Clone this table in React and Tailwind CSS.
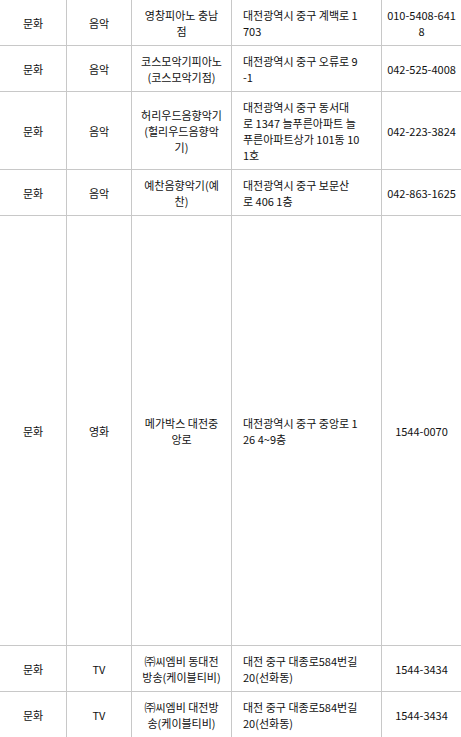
import React from "react";

const rows = [
  { a: "문화", b: "음악", c: ["영창피아노 충남", "점"], d: ["대전광역시 중구 계백로 1", "703"], e: ["010-5408-641", "8"] },
  { a: "문화", b: "음악", c: ["코스모악기피아노", "(코스모악기점)"], d: ["대전광역시 중구 오류로 9", "-1"], e: ["042-525-4008"] },
  { a: "문화", b: "음악", c: ["허리우드음향악기", "(헐리우드음향악", "기)"], d: ["대전광역시 중구 동서대", "로 1347 늘푸른아파트 늘", "푸른아파트상가 101동 10", "1호"], e: ["042-223-3824"] },
  { a: "문화", b: "음악", c: ["예찬음향악기(예", "찬)"], d: ["대전광역시 중구 보문산", "로 406 1층"], e: ["042-863-1625"] },
  { a: "문화", b: "영화", c: ["메가박스 대전중", "앙로"], d: ["대전광역시 중구 중앙로 1", "26 4~9층"], e: ["1544-0070"], tall: true },
  { a: "문화", b: "TV", c: ["㈜씨엠비 동대전", "방송(케이블티비)"], d: ["대전 중구 대종로584번길", "20(선화동)"], e: ["1544-3434"] },
  { a: "문화", b: "TV", c: ["㈜씨엠비 대전방", "송(케이블티비)"], d: ["대전 중구 대종로584번길", "20(선화동)"], e: ["1544-3434"] },
];

function Lines({ lines }) {
  return (
    <div>
      {lines.map((l, i) => (
        <div key={i} className="whitespace-nowrap">{l}</div>
      ))}
    </div>
  );
}

export default function App() {
  return (
    <div
      className="w-[461px] h-[737px] overflow-hidden bg-white text-[#111] text-[11px] leading-[16px]"
      style={{ fontFamily: '"Noto Sans CJK KR", "Noto Sans", sans-serif' }}
    >
      {rows.map((r, i) => (
        <div
          key={i}
          className={`grid grid-cols-[67px_65px_100px_150px_1fr] border-b border-[#c8c8c8] ${r.tall ? "h-[430px]" : ""}`}
        >
          <div className="flex items-center justify-center border-r border-[#c8c8c8] py-[6.5px] text-center">
            {r.a}
          </div>
          <div className="flex items-center justify-center border-r border-[#c8c8c8] py-[6.5px] text-center">
            {r.b}
          </div>
          <div className="flex items-center justify-center border-r border-[#c8c8c8] py-[6.5px] text-center">
            <Lines lines={r.c} />
          </div>
          <div className="flex items-center justify-start border-r border-[#c8c8c8] py-[6.5px] pl-[11px] text-left">
            <Lines lines={r.d} />
          </div>
          <div className="flex items-center justify-center py-[6.5px] text-center">
            <Lines lines={r.e} />
          </div>
        </div>
      ))}
    </div>
  );
}
